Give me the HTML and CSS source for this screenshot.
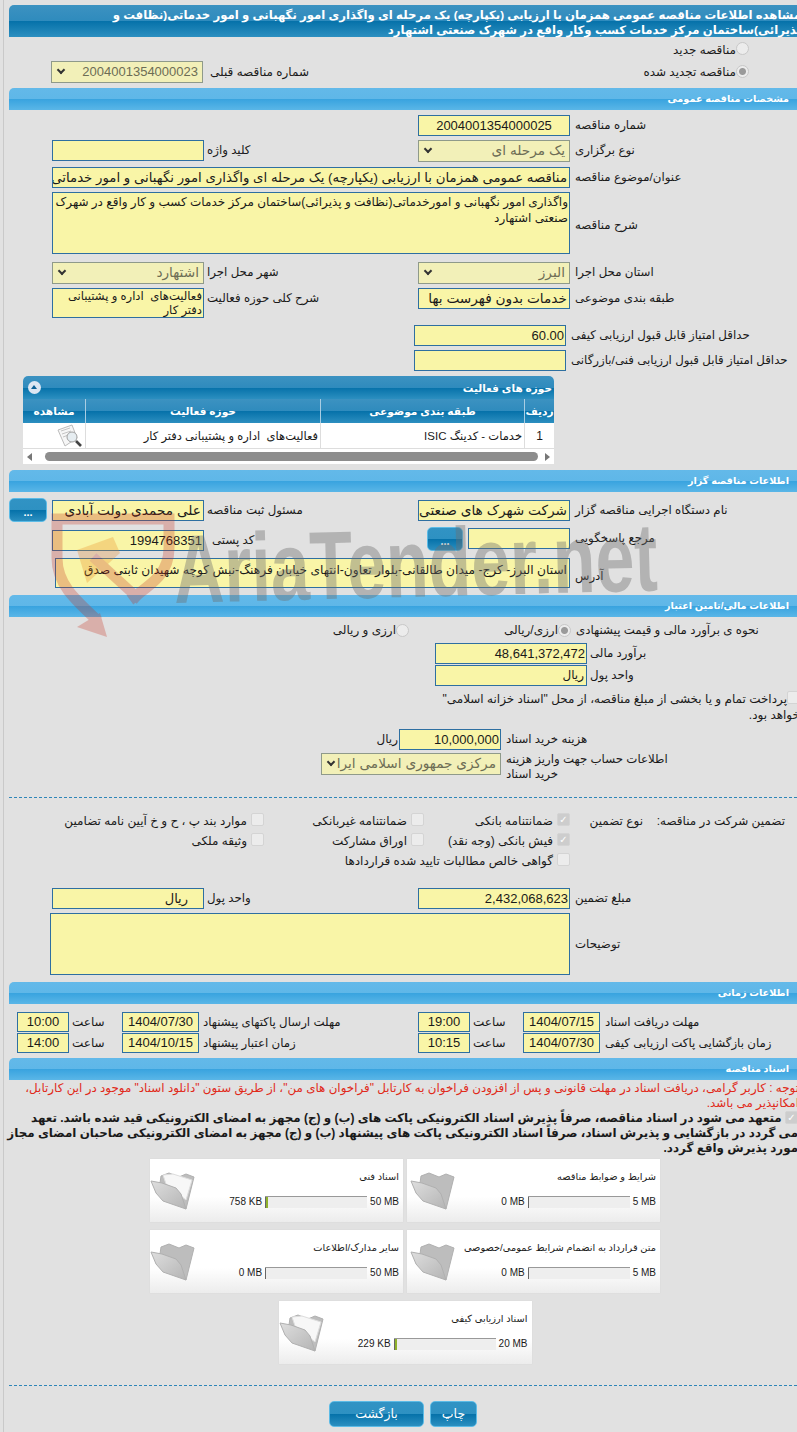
FILE: index.html
```html
<!DOCTYPE html>
<html lang="fa" dir="rtl">
<head>
<meta charset="utf-8">
<title>مشاهده اطلاعات مناقصه</title>
<link rel="stylesheet" href="styles.css">
</head>
<body>
<div class="page">
  <div class="title-bar"><div class="title-in">مشاهده اطلاعات مناقصه عمومی همزمان با ارزیابی (یکپارچه) یک مرحله ای واگذاری امور نگهبانی و امور خدماتی(نظافت و پذیرائی)ساختمان مرکز خدمات کسب وکار واقع در شهرک صنعتی اشتهارد</div></div>

  <div class="opt opt1"><span class="radio"></span><span class="lbl">مناقصه جدید</span></div>
  <div class="opt opt2">
    <span class="radio on r4"></span><span class="lbl w-renew l4">مناقصه تجدید شده</span>
    <span class="lbl prev-lbl l4">شماره مناقصه قبلی</span>
    <span class="field sel w152 gray num-sel">2004001354000023<i class="arrow"></i></span>
  </div>

  <div class="sec s1">مشخصات مناقصه عمومی</div>

  <div class="form f1">
    <div class="row h25"><span class="k">شماره مناقصه</span><span class="field w152 num center">2004001354000025</span></div>
    <div class="row h27">
      <span class="k">نوع برگزاری</span><span class="field sel w152 gray">یک مرحله ای<i class="arrow"></i></span>
      <span class="k2">کلید واژه</span><span class="field w152"></span>
    </div>
    <div class="row h25"><span class="k">عنوان/موضوع مناقصه</span><span class="field w518 subject">مناقصه عمومی همزمان با ارزیابی (یکپارچه) یک مرحله ای واگذاری امور نگهبانی و امور خدماتی</span></div>
    <div class="row h70"><span class="k k-mid">شرح مناقصه</span><span class="field w518 h62 area">واگذاری امور نگهبانی و امورخدماتی(نظافت و پذیرائی)ساختمان مرکز خدمات کسب و کار واقع در شهرک صنعتی اشتهارد</span></div>
    <div class="row h26">
      <span class="k">استان محل اجرا</span><span class="field sel w152 gray">البرز<i class="arrow"></i></span>
      <span class="k2">شهر محل اجرا</span><span class="field sel w152 gray">اشتهارد<i class="arrow"></i></span>
    </div>
    <div class="row h37">
      <span class="k">طبقه بندی موضوعی</span><span class="field w152 big">خدمات بدون فهرست بها</span>
      <span class="k2">شرح کلی حوزه فعالیت</span><span class="field w152 h30 area tight">فعالیت‌های&nbsp; اداره و پشتیبانی دفتر کار</span>
    </div>
    <div class="row h25"><span class="k k-long">حداقل امتیاز قابل قبول ارزیابی کیفی</span><span class="field w152 num end">60.00</span></div>
    <div class="row h25"><span class="k k-long">حداقل امتیاز قابل قبول ارزیابی فنی/بازرگانی</span><span class="field w152"></span></div>
  </div>

  <div class="panel">
    <div class="panel-head"><span>حوزه های فعالیت</span><i class="collapse"></i></div>
    <div class="thead">
      <span class="c1">ردیف</span><span class="c2">طبقه بندی موضوعی</span><span class="c3">حوزه فعالیت</span><span class="c4">مشاهده</span>
    </div>
    <div class="tbody">
      <span class="c1 n">1</span><span class="c2">خدمات - کدینگ ISIC</span><span class="c3">فعالیت‌های&nbsp; اداره و پشتیبانی دفتر کار</span>
      <span class="c4 ic">
        <svg width="26" height="24" viewBox="0 0 26 24"><path d="M1 6 15 1l5 13-12 8z" fill="#f6f6f6" stroke="#bcbcbc"/><path d="M4 7l9-3M5 10l9-3M6 13l4-1.500" stroke="#c4c4c4"/><circle cx="15" cy="13" r="5" fill="#e6edf1" stroke="#a0a0a0"/><path d="m19 17 5 5" stroke="#444" stroke-width="2.600"/></svg>
      </span>
    </div>
    <div class="scroll"><i class="tri r"></i><span class="thumb"></span><i class="tri l"></i></div>
  </div>

  <div class="sec s2">اطلاعات مناقصه گزار</div>

  <div class="form f2">
    <div class="row h28">
      <span class="k mt2">نام دستگاه اجرایی مناقصه گزار</span><span class="field w152 big mt2">شرکت شهرک های صنعتی</span>
      <span class="k2 mt2">مسئول ثبت مناقصه</span><span class="field w152 big mt2">علی محمدی دولت آبادی</span>
      <span class="btn dots bw38">...</span>
    </div>
    <div class="row h32">
      <span class="k mt2">مرجع پاسخگویی</span><span class="field w102 mt2"></span><span class="btn dots bw36 mt1">...</span>
      <span class="k2 k2p mt4">کد پستی</span><span class="field w152 num end mt4">1994768351</span>
    </div>
    <div class="row h30"><span class="k addr-k">آدرس</span><span class="field w515 h30 addr">استان البرز- کرج- میدان طالقانی-بلوار تعاون-انتهای خیابان فرهنگ-نبش کوچه شهیدان ثابتی صدق</span></div>
  </div>

  <div class="sec s3">اطلاعات مالی/تامین اعتبار</div>

  <div class="form">
    <div class="row h26 mid">
      <span class="k kf">نحوه ی برآورد مالی و قیمت پیشنهادی</span><span class="radio on"></span><span class="lbl w-cur">ارزی/ریالی</span>
      <span class="radio"></span><span class="lbl">ارزی و ریالی</span>
    </div>
    <div class="row h22"><span class="k kf2">برآورد مالی</span><span class="field w152 num end">48,641,372,472</span></div>
    <div class="row h22"><span class="k kf2">واحد پول</span><span class="field w152">ریال</span></div>
    <p class="pay"><span class="check"></span>پرداخت تمام و یا بخشی از مبلغ مناقصه، از محل "اسناد خزانه اسلامی" خواهد بود.</p>
    <div class="row h24"><span class="k kf3">هزینه خرید اسناد</span><span class="field w102 num end">10,000,000</span><span class="lbl unit">ریال</span></div>
    <div class="row h28"><span class="k kf3 two">اطلاعات حساب جهت واریز هزینه خرید اسناد</span><span class="field sel w180 gray">مرکزی جمهوری اسلامی ایرا<i class="arrow"></i></span></div>
  </div>

  <div class="dash d1"></div>

  <div class="guar">
    <span class="g-t">تضمین شرکت در مناقصه:</span>
    <span class="g-s">نوع تضمین</span>
    <div class="g-grid">
      <label class="g"><span class="check on">✓</span>ضمانتنامه بانکی</label>
      <label class="g"><span class="check"></span>ضمانتنامه غیربانکی</label>
      <label class="g"><span class="check"></span>موارد بند پ ، ح و خ آیین نامه تضامین</label>
      <label class="g"><span class="check on">✓</span>فیش بانکی (وجه نقد)</label>
      <label class="g"><span class="check"></span>اوراق مشارکت</label>
      <label class="g"><span class="check"></span>وثیقه ملکی</label>
      <label class="g g-wide"><span class="check"></span>گواهی خالص مطالبات تایید شده قراردادها</label>
    </div>
  </div>

  <div class="form">
    <div class="row h25"><span class="k">مبلغ تضمین</span><span class="field w152 num end">2,432,068,623</span>
      <span class="k2">واحد پول</span><span class="field w152 pad15">ریال</span></div>
    <div class="row h62 mid"><span class="k">توضیحات</span><span class="field w520 h62"></span></div>
  </div>

  <div class="sec s4">اطلاعات زمانی</div>

  <div class="form f5">
    <div class="row h21">
      <span class="k kt">مهلت دریافت اسناد</span><span class="field w77 num center">1404/07/15</span><span class="k3">ساعت</span><span class="field w52 num center">19:00</span>
      <span class="k4">مهلت ارسال پاکتهای پیشنهاد</span><span class="field w77 num center">1404/07/30</span><span class="k3">ساعت</span><span class="field w52 num center">10:00</span>
    </div>
    <div class="row h21">
      <span class="k kt">زمان بازگشایی پاکت ارزیابی کیفی</span><span class="field w77 num center">1404/07/30</span><span class="k3">ساعت</span><span class="field w52 num center">10:15</span>
      <span class="k4">زمان اعتبار پیشنهاد</span><span class="field w77 num center">1404/10/15</span><span class="k3">ساعت</span><span class="field w52 num center">14:00</span>
    </div>
  </div>

  <div class="sec s5">اسناد مناقصه</div>

  <p class="notice">توجه : کاربر گرامی، دریافت اسناد در مهلت قانونی و پس از افزودن فراخوان به کارتابل "فراخوان های من"، از طریق ستون "دانلود اسناد" موجود در این کارتابل، امکانپذیر می باشد.</p>
  <p class="pledge"><span class="check on">✓</span> متعهد می شود در اسناد مناقصه، صرفاً پذیرش اسناد الکترونیکی پاکت های (ب) و (ج) مجهز به امضای الکترونیکی قید شده باشد. تعهد<br>می گردد در بازگشایی و پذیرش اسناد، صرفاً اسناد الکترونیکی پاکت های پیشنهاد (ب) و (ج) مجهز به امضای الکترونیکی صاحبان امضای مجاز<br>مورد پذیرش واقع گردد.</p>

  <div class="cards">
    <div class="card"><div class="c-t">شرایط و ضوابط مناقصه</div><div class="c-m"><span dir="ltr">5 MB</span><span class="bar"></span><span dir="ltr">0 MB</span></div><svg class="folder" viewBox="0 0 60 60"><use href="#fold"/></svg></div>
    <div class="card"><div class="c-t">اسناد فنی</div><div class="c-m"><span dir="ltr">50 MB</span><span class="bar"><b></b></span><span dir="ltr">758 KB</span></div><svg class="folder fp" viewBox="0 0 60 60"><use href="#foldp"/></svg></div>
    <div class="card"><div class="c-t">متن قرارداد به انضمام شرایط عمومی/خصوصی</div><div class="c-m"><span dir="ltr">5 MB</span><span class="bar"></span><span dir="ltr">0 MB</span></div><svg class="folder" viewBox="0 0 60 60"><use href="#fold"/></svg></div>
    <div class="card"><div class="c-t">سایر مدارک/اطلاعات</div><div class="c-m"><span dir="ltr">50 MB</span><span class="bar"></span><span dir="ltr">0 MB</span></div><svg class="folder fp" viewBox="0 0 60 60"><use href="#fold"/></svg></div>
    <div class="card solo"><div class="c-t">اسناد ارزیابی کیفی</div><div class="c-m"><span dir="ltr">20 MB</span><span class="bar"><b></b></span><span dir="ltr">229 KB</span></div><svg class="folder fp" viewBox="0 0 60 60"><use href="#foldp"/></svg></div>
  </div>

  <div class="dash d2"></div>

  <div class="actions"><span class="btn b-print">چاپ</span><span class="btn b-back">بازگشت</span></div>
</div>

<svg class="defs" width="0" height="0">
  <defs>
    <linearGradient id="fg" x1="0" y1="0" x2="1" y2="1"><stop offset="0" stop-color="#dedede"/><stop offset="1" stop-color="#b4b4b4"/></linearGradient>
    <g id="fold">
      <path d="M12 16 20 13 30 17 37 14 45 17 37 49 10 30z" fill="#bdbdbd" stroke="#b0b0b0" stroke-linejoin="round"/>
      <path d="M2 21 13 23 27 28 32 34 37 49 14 41 7 33z" fill="url(#fg)" stroke="#b0b0b0" stroke-linejoin="round"/>
    </g>
    <g id="foldp">
      <path d="M12 16 20 13 30 17 37 14 45 17 37 49 10 30z" fill="#bdbdbd" stroke="#b0b0b0" stroke-linejoin="round"/>
      <path d="M14 15 24 14 43 20 37 40 17 24z" fill="#f7f7f7" stroke="#dedede"/>
      <path d="M2 21 13 23 27 28 32 34 37 49 14 41 7 33z" fill="url(#fg)" stroke="#b0b0b0" stroke-linejoin="round"/>
    </g>
  </defs>
</svg>

<div class="watermark" dir="ltr">
  <svg class="wm-shield" viewBox="0 0 130 130">
    <path d="M82 87C105 70 121 60 121 35V6H9V45C9 70 25 85 50 108" fill="none" stroke="#c5301f" stroke-width="11"/>
    <path d="M29 37 65 24 72 40 39 70z" fill="#e8861c"/>
    <path d="M45 44 92 87" stroke="#c5301f" stroke-width="10"/>
    <path d="M29 114 59 124 52 100z" fill="#c5301f"/>
  </svg>
  <span class="wm-text">AriaTender.net</span>
</div>
</body>
</html>
```
FILE: styles.css
```css
* { box-sizing: border-box; }
html, body { margin: 0; padding: 0; }
body {
  background: #e1e1e1;
  font-family: "Liberation Sans", "DejaVu Sans", sans-serif;
  font-size: 12px;
  color: #1a1a1a;
  width: 797px;
  height: 1432px;
  overflow: hidden;
  position: relative;
}
.page {
  margin-left: 3px;
  border-left: 1px solid #c9c9c9;
  padding: 5px 0 0 5px;
  height: 1432px;
}
.defs { position: absolute; }

.title-bar {
  height: 32px;
  background: linear-gradient(#3c92c1 0, #2f8bbd 50%, #0571a9 50%, #2c8fc0 100%);
  border-radius: 5px 0 0 0;
}
.title-in {
  margin: 0 -4px 0 70px;
  padding-top: 2px;
  color: #fff;
  font-weight: bold;
  font-size: 11.7px;
  line-height: 15px;
}

.opt { display: flex; align-items: flex-start; height: 24px; padding-right: 48px; }
.opt1 { padding-top: 5px; }
.row { display: flex; align-items: flex-start; }
.row.mid { align-items: center; }
.h21 { height: 21px; }
.h22 { height: 22px; }
.h24 { height: 24px; }
.h25 { height: 25px; }
.h26 { height: 26px; }
.h27 { height: 27px; }
.h28 { height: 28px; }
.h30 { height: 30px; }
.h32 { height: 32px; }
.h37 { height: 37px; }
.h62 { height: 62px; }
.h70 { height: 70px; }
.mt1 { margin-top: 1px; }
.mt2 { margin-top: 2px; }
.mt4 { margin-top: 4px; }

.radio {
  width: 13px; height: 13px; border-radius: 50%;
  background: #ececec; border: 1px solid #c8c8c8; flex: none;
}
.radio.on { background: radial-gradient(#9a9a9a 0 3px, #ececec 4px); }
.r4 { margin-top: 4px; }
.lbl { line-height: 16px; white-space: nowrap; }
.l4 { margin-top: 3px; }
.w-renew { width: 427px; }
.prev-lbl { width: 106px; }

.sec {
  height: 22px;
  background: linear-gradient(#63b9e9 0, #5fb7e8 50%, #38a3df 50%, #5ab6e7 100%);
  border-radius: 5px 0 0 0;
  color: #fff;
  font-weight: bold;
  font-size: 9.7px;
  line-height: 22px;
  padding-right: 8px;
}
.s1 { margin-top: 3px; }
.s2 { margin-top: 6px; }
.s3 { margin-top: 7px; }
.s4 { margin-top: 7px; }
.s5 { margin-top: 4px; }

.k {
  width: 227px; flex: none;
  line-height: 20px; text-align: left; padding-left: 5px;
  font-size: 11.8px; white-space: nowrap;
}
.k2 {
  width: 214px; flex: none;
  line-height: 20px; text-align: left; padding-left: 3px;
  font-size: 11.8px; white-space: nowrap;
}
.k-mid { line-height: 66px; }
.k-long { width: 231px; }
.f1 { margin-top: 5px; }

.field {
  display: block; flex: none;
  height: 21px;
  border: 1px solid #2e6fa1;
  background: #f9f5a7;
  line-height: 19px;
  padding: 0 2px;
  white-space: nowrap;
  overflow: hidden;
  position: relative;
  font-size: 12px;
}
.big { font-size: 13.7px; }
.subject { font-size: 13.3px; }
.num { font-size: 13px; }
.center { text-align: center; }
.end { direction: ltr; text-align: right; padding-right: 1px; }
.pad15 { padding-right: 15px; font-size: 13px; }
.w52 { width: 52px; }
.w77 { width: 77px; }
.w102 { width: 102px; }
.w152 { width: 152px; }
.w180 { width: 180px; }
.w515 { width: 515px; }
.w518 { width: 518px; }
.w520 { width: 520px; }
.field.h62 { height: 62px; }
.field.h30 { height: 30px; }
.area { white-space: normal; line-height: 16px; padding: 1px; }
.tight { line-height: 14px; font-size: 11.6px; padding: 0 1px; }
.addr { line-height: 18px; padding-top: 2px; font-size: 12.2px; }
.addr-k { line-height: 36px; }

.sel { height: 22px; border-color: #8f9a8a; background: #f2f0b8; line-height: 20px; }
.sel.gray { color: #6d6d55; font-size: 13.7px; padding-right: 4px; padding-left: 18px; }
.sel.num-sel { font-size: 13px; padding-left: 0; }
.arrow {
  position: absolute; left: 6px; top: 5px;
  width: 6px; height: 6px;
  border: solid #333; border-width: 0 2px 2px 0;
  transform: rotate(45deg);
}

.panel {
  margin: 1px 243px 0 14px;
  height: 88px;
  background: #fff;
  border-radius: 5px 5px 0 0;
  overflow: hidden;
}
.panel-head {
  height: 23px;
  background: linear-gradient(#3c92c1 0, #2f8bbd 50%, #0571a9 50%, #2c8fc0 100%);
  color: #fff; font-weight: bold; font-size: 10.5px;
  display: flex; justify-content: space-between; align-items: center; padding: 0 2px 0 5px;
}
.collapse { width: 13px; height: 13px; border-radius: 50%; background: #dce6f2; position: relative; }
.collapse::after { content: ""; position: absolute; left: 3px; top: 4px; border: 3.5px solid transparent; border-bottom: 4px solid #0b5f94; border-top: 0; }
.thead {
  height: 24px; display: flex;
  background: linear-gradient(#3c92c1 0, #2f8bbd 50%, #0571a9 50%, #2c8fc0 100%);
  color: #fff; font-weight: bold; font-size: 10.6px; line-height: 24px; text-align: center;
}
.c1 { width: 30px; flex: none; border-left: 1px solid #a9cde3; white-space: nowrap; }
.c2 { width: 204px; flex: none; border-left: 1px solid #a9cde3; }
.c3 { width: 235px; flex: none; border-left: 1px solid #a9cde3; }
.c4 { flex: 1; }
.tbody { height: 26px; display: flex; line-height: 26px; border-bottom: 1px solid #ddd; font-size: 11.5px; }
.tbody .c1, .tbody .c2, .tbody .c3 { border-left: 1px solid #ddd; }
.tbody .c2, .tbody .c3 { text-align: right; padding-right: 2px; white-space: nowrap; }
.n { text-align: center; font-size: 12px; }
.ic { display: flex; align-items: center; justify-content: flex-start; padding-right: 2px; }
.scroll { height: 15px; display: flex; align-items: center; gap: 7px; padding: 0 4px; }
.thumb { flex: 1; height: 9px; background: #8d8d8d; border-radius: 5px; margin-left: 6px; }
.tri { width: 0; height: 0; border: 4px solid transparent; }
.tri.r { border-left: 5px solid #777; border-right: 0; }
.tri.l { border-right: 5px solid #777; border-left: 0; }

.f2 { margin-top: 6px; }
.btn {
  display: block; flex: none;
  background: linear-gradient(#3193c4 0, #2e91c2 50%, #0571a9 50%, #2b8fc0 100%);
  border: 1px solid #5cbbe6;
  border-radius: 5px;
  color: #fff;
  text-align: center;
}
.dots { height: 24px; line-height: 27px; font-weight: bold; font-size: 11px; }
.bw38 { width: 38px; margin-right: 5px; }
.bw36 { width: 36px; margin-right: 5px; }
.k2p { width: 223px; padding-left: 8px; }

.kf { width: 226px; }
.w-cur { width: 149px; }
.kf2 { width: 210px; padding-left: 3px; }
.kf3 { width: 296px; }
.two { white-space: normal; line-height: 15px; padding-right: 126px; margin-top: -1px; }
.unit { line-height: 20px; padding-right: 1px; }
.pay {
  margin: 0 -3px 0 0;
  height: 42px;
  width: 369px;
  padding-top: 4px;
  line-height: 16px;
}
.check {
  display: inline-block; width: 13px; height: 13px; flex: none;
  background: #ececec; border: 1px solid #d4d4d4; border-radius: 2px;
  text-align: center; line-height: 12px; font-size: 10px; color: #fff;
  vertical-align: top;
}
.check.on { background: #cdcdcd; }

.dash { border-top: 1px dashed #2f86b8; }
.d1 { margin-top: 16px; }
.guar { display: flex; height: 90px; padding: 14px 12px 0 0; }
.g-t { width: 142px; flex: none; line-height: 14px; white-space: nowrap; padding-top: 2px; }
.g-s { width: 73px; flex: none; line-height: 14px; white-space: nowrap; padding-top: 2px; }
.g-grid { display: grid; grid-template-columns: 146px 160px auto; grid-auto-rows: 20px; }
.g { display: flex; gap: 4px; white-space: nowrap; line-height: 16px; padding-top: 1px; }
.g-wide { grid-column: 1 / span 2; }

.f5 { margin-top: 8px; }
.f5 .field { height: 20px; line-height: 18px; }
.kt { width: 197px; }
.k3 { width: 53px; flex: none; text-align: left; padding-left: 3px; line-height: 20px; }
.k4 { width: 219px; flex: none; text-align: left; padding-left: 4px; line-height: 20px; white-space: nowrap; font-size: 11.8px; }

.notice { margin: 1px -2px 0 0; color: #e02a1a; line-height: 15px; font-size: 11.9px; }
.pledge { margin: 0 -1px 0 -4px; font-weight: bold; line-height: 15px; font-size: 11.9px; }

.cards {
  margin: 3px 137px 0 0;
  display: grid;
  grid-template-columns: 253px 253px;
  gap: 8px 4px;
}
.card {
  height: 63px;
  background: linear-gradient(#fff 60%, #ececec);
  box-shadow: 0 0 1px #ccc;
  position: relative;
  padding: 10px 4px 0;
  font-size: 9.8px;
}
.solo { grid-column: 1 / span 2; justify-self: center; width: 253px; }
.c-t { line-height: 16px; white-space: nowrap; }
.c-m { display: flex; align-items: center; gap: 3px; margin-top: 10px; line-height: 14px; font-size: 10px; }
.bar { width: 102px; height: 12px; background: #eee; border-top: 1px solid #999; position: relative; display: block; flex: none; }
.bar::after { content: ""; position: absolute; left: 0; top: 0; bottom: 0; border-left: 1px solid #666; }
.bar b { position: absolute; left: 0; top: 0; bottom: 0; width: 3px; background: #8fb22d; }
.folder { position: absolute; left: 2px; top: 1px; width: 60px; height: 60px; }
.fp { left: -1px; }

.d2 { margin-top: 21px; }
.actions { display: flex; justify-content: center; gap: 6px; margin-top: 15px; }
.b-back { width: 95px; height: 26px; line-height: 24px; font-size: 12.5px; }
.b-print { width: 47px; height: 26px; line-height: 24px; font-size: 12.5px; }

.watermark { position: absolute; left: 48px; top: 513px; width: 620px; height: 130px; pointer-events: none; }
.wm-shield { position: absolute; left: 0; top: 0; width: 130px; height: 130px; opacity: .28; }
.wm-text {
  position: absolute; left: 127px; top: 8px;
  font: bold 97px/97px "Liberation Sans", sans-serif;
  color: rgba(110,110,110,.4);
  transform: rotate(-1.500deg) scaleX(.72);
  transform-origin: left bottom;
  white-space: nowrap;
}
```
